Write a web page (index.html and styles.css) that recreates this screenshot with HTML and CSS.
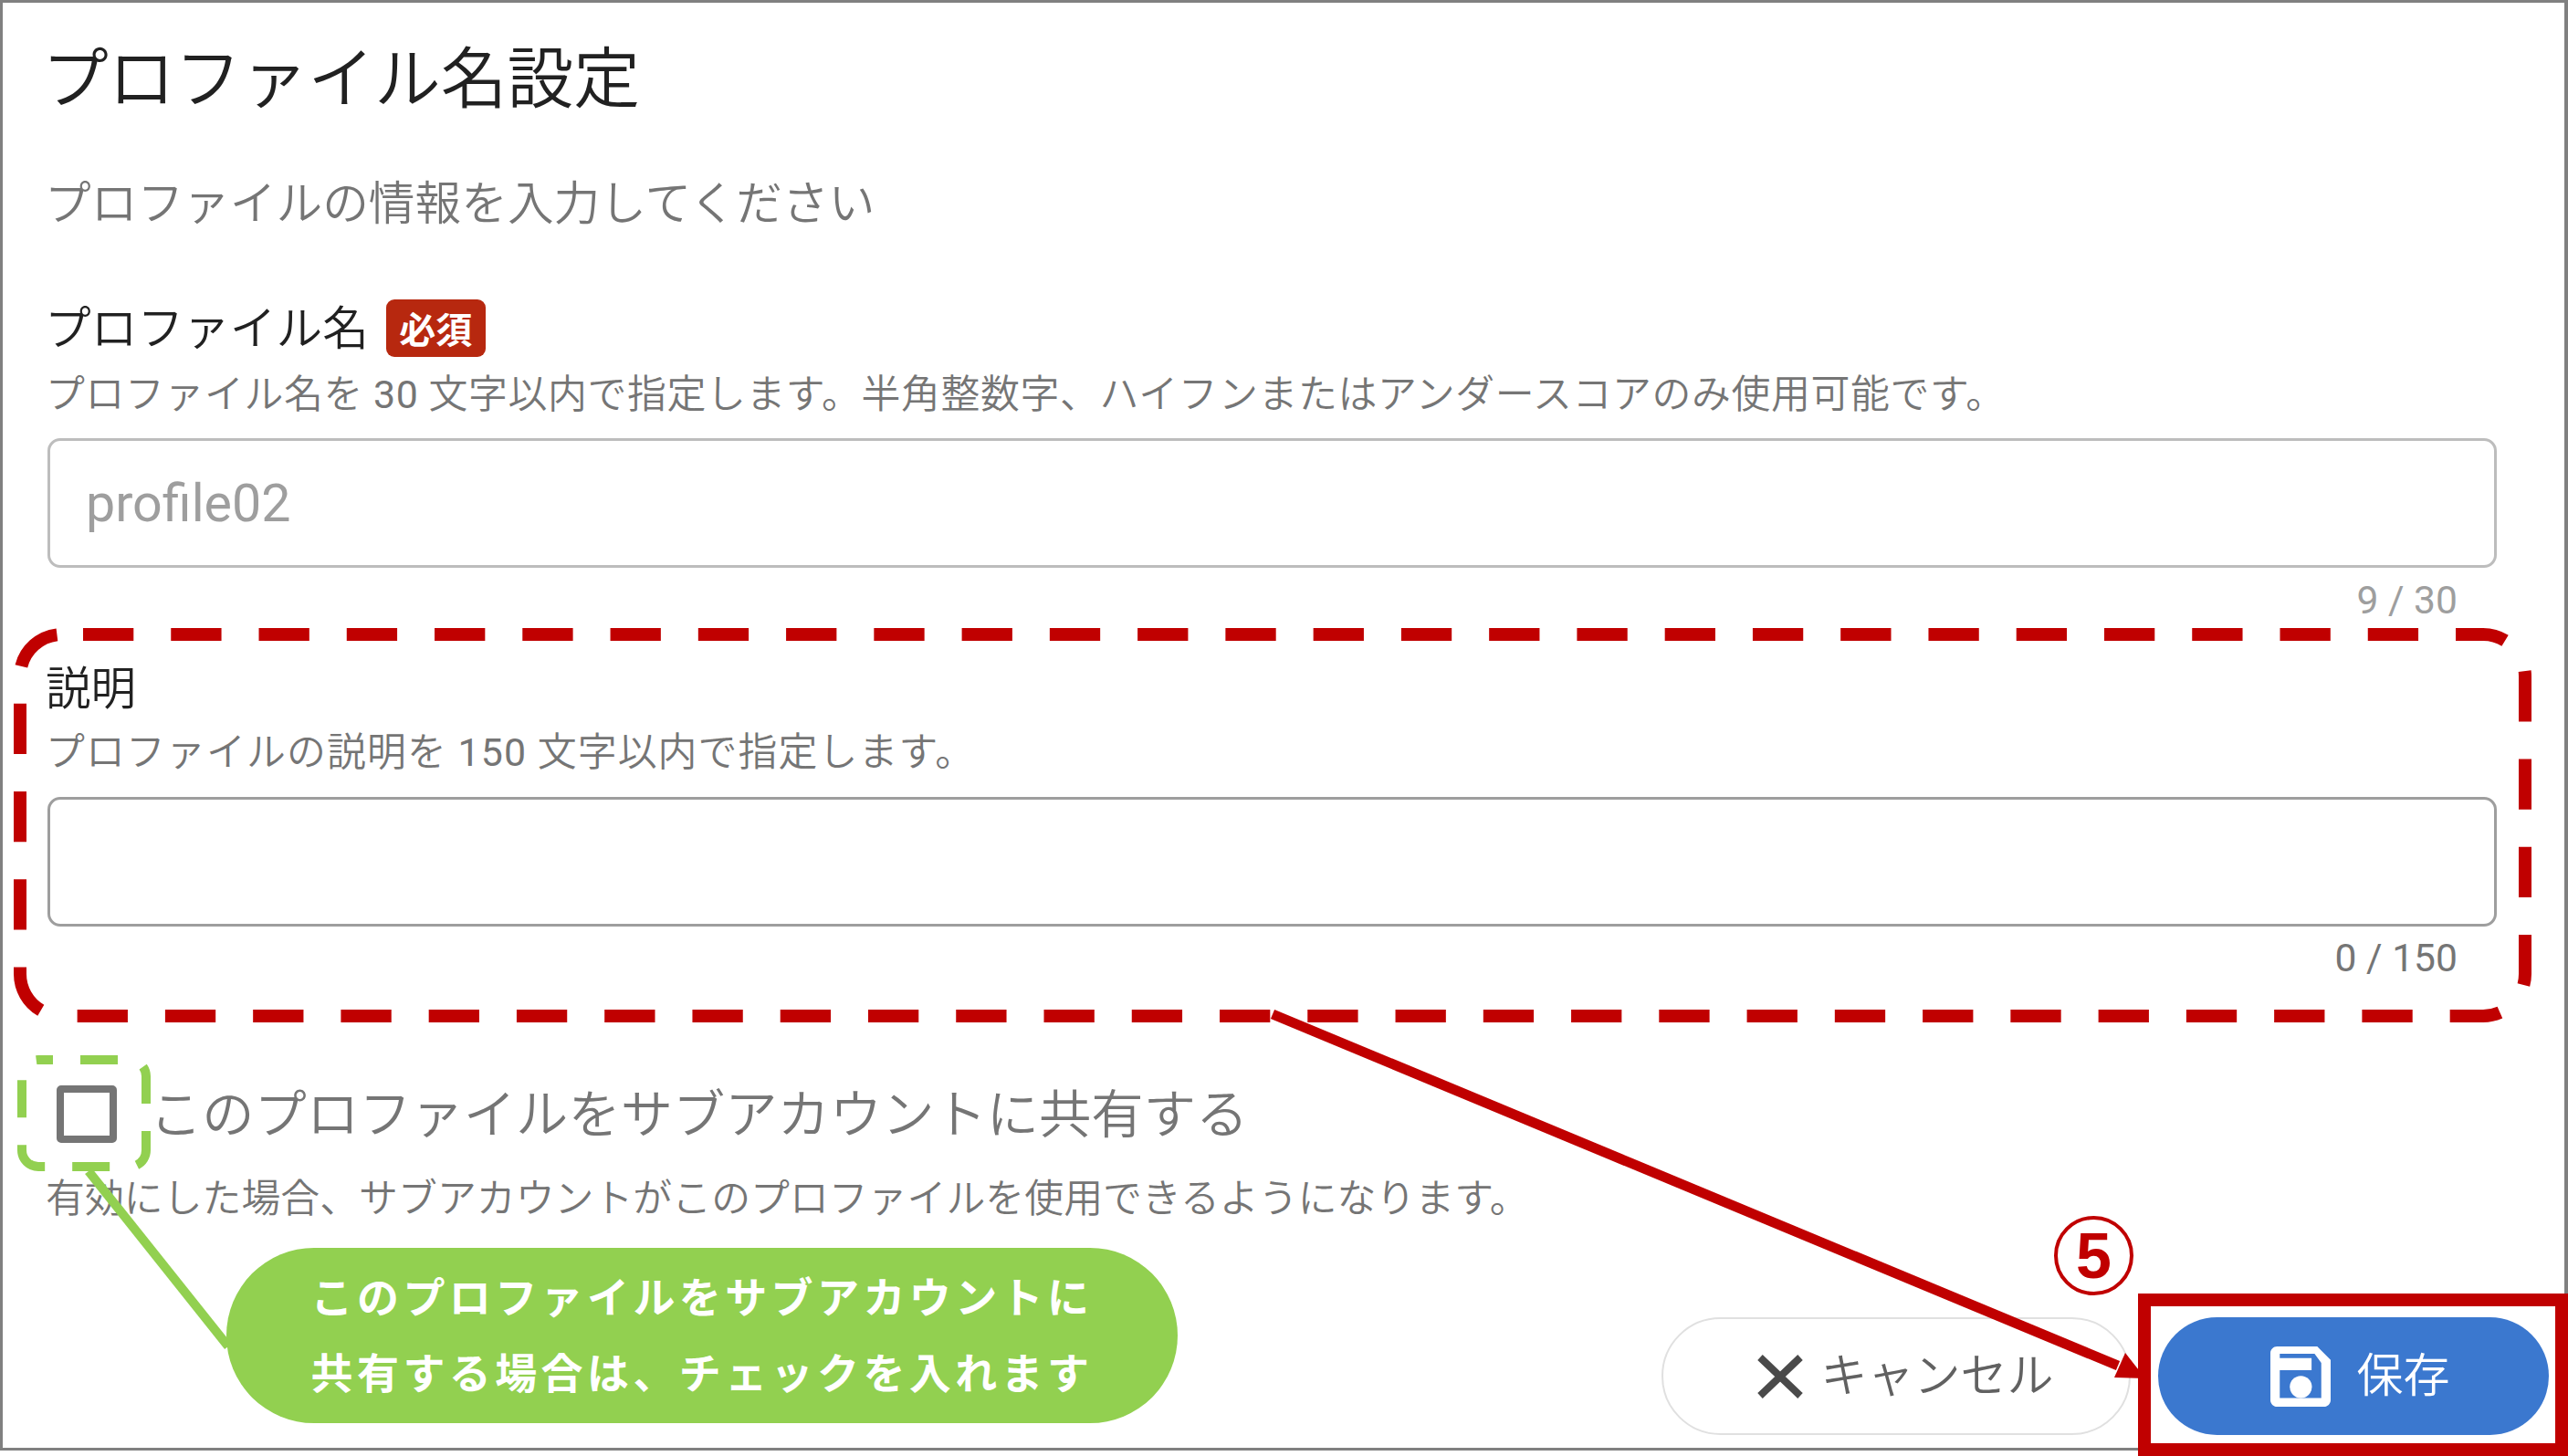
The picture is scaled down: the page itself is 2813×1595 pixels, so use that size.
FILE: index.html
```html
<!DOCTYPE html>
<html lang="ja">
<head>
<meta charset="utf-8">
<title>プロファイル名設定</title>
<link rel="stylesheet" href="styles.css">
</head>
<body>
<div class="page">
  <main class="frame">
    <h1 class="title">プロファイル名設定</h1>
    <p class="subtitle">プロファイルの情報を入力してください</p>

    <div class="label-row">
      <span class="label label-name">プロファイル名</span>
      <span class="badge">必須</span>
    </div>
    <p class="help help-first">プロファイル名を <span class="num">30</span> 文字以内で指定します。半角整数字、ハイフンまたはアンダースコアのみ使用可能です。</p>
    <div class="input input-name"><span class="placeholder">profile02</span></div>
    <div class="counter counter-light">9 / 30</div>

    <div class="label label-desc">説明</div>
    <p class="help help-desc">プロファイルの説明を <span class="num">150</span> 文字以内で指定します。</p>
    <div class="input input-desc"></div>
    <div class="counter counter-dark">0 / 150</div>

    <label class="check-row">
      <span class="checkbox"></span>
      <span class="check-label">このプロファイルをサブアカウントに共有する</span>
    </label>
    <p class="help help-check">有効にした場合、サブアカウントがこのプロファイルを使用できるようになります。</p>

    <div class="actions">
      <button class="btn btn-cancel">
        <svg class="icon-x" viewBox="0 0 50 48"><path d="M3 3L47 45M47 3L3 45"/></svg>
        <span>キャンセル</span>
      </button>
      <button class="btn btn-save">
        <svg class="icon-save" viewBox="0 0 24 24"><path fill-rule="evenodd" d="M17 3H5C3.89 3 3 3.9 3 5V19C3 20.1 3.89 21 5 21H19C20.1 21 21 20.1 21 19V7L17 3ZM18.2 18.4H5.8V10.1H15.3V6.5H5.8V5.2H16.2L18.2 7.9V18.4Z"/><circle cx="12.1" cy="15.1" r="3.3"/></svg>
        <span>保存</span>
      </button>
    </div>
  </main>

  <svg class="overlay" viewBox="0 0 2813 1595">
    <rect class="dash-red" x="22" y="695" width="2744" height="418" rx="46" ry="46"/>
    <rect class="dash-green" x="24" y="1161" width="136" height="117" rx="18" ry="18"/>
    <path class="line-green" d="M97 1283L250 1475"/>
    <path class="line-red" d="M1394 1111L2320 1496"/>
    <path class="head-red" d="M2316 1509L2328 1482L2350 1510Z"/>
    <rect class="box-red" x="2349" y="1424" width="457" height="164"/>
  </svg>

  <div class="step"><span>5</span></div>
  <div class="callout">
    <span>このプロファイルをサブアカウントに</span>
    <span>共有する場合は、チェックを入れます</span>
  </div>
</div>
</body>
</html>
```

FILE: styles.css
```css
* { box-sizing: border-box; }

html, body {
  margin: 0;
  padding: 0;
  background: #fff;
}

.page {
  position: relative;
  width: 2813px;
  height: 1595px;
  overflow: hidden;
  font-family: Roboto, "Noto Sans CJK JP", sans-serif;
  font-weight: 350;
}

.frame {
  display: flex;
  flex-direction: column;
  width: 2813px;
  height: 1589px;
  border: 3px solid #808080;
  border-right-width: 4px;
  padding: 37px 74px 0 49px;
}

.title {
  margin: 2px 0 0 -6px;
  font-size: 72.8px;
  font-weight: 350;
  line-height: 90px;
  color: #212121;
}

.subtitle {
  margin: 57px 0 0 -3px;
  font-size: 50.7px;
  line-height: 70px;
  color: #757575;
}

.label-row {
  display: flex;
  align-items: center;
  gap: 19px;
  height: 64px;
  margin-top: 68px;
}

.label {
  font-size: 50.7px;
  line-height: 60px;
  color: #212121;
}

.label-name { margin: 3px 0 0 -3px; }
.label-desc { margin: 43px 0 0 -2px; font-size: 49.5px; }

.badge {
  display: flex;
  align-items: center;
  justify-content: center;
  width: 109px;
  height: 63px;
  border-radius: 9px;
  background: #b7280f;
  color: #fff;
  font-size: 40px;
  font-weight: 700;
  font-family: "Noto Sans CJK JP", sans-serif;
}

.help {
  margin: 0 0 0 -2px;
  font-size: 42.9px;
  line-height: 60px;
  color: #757575;
  white-space: nowrap;
}

.num { font-weight: 400; }

.help-first { margin-top: 11px; letter-spacing: 0.6px; }
.help-desc { margin-top: 9px; letter-spacing: 1.1px; }
.help-check { margin-top: 23px; }

.input {
  display: flex;
  align-items: center;
  height: 142px;
  border: 3px solid #bdbdbd;
  border-radius: 14px;
  padding-left: 39px;
}

.input-name { margin-top: 18px; }
.input-desc { margin-top: 19px; border-color: #9e9e9e; }

.placeholder {
  font-size: 57.4px;
  font-weight: 400;
  color: #9e9e9e;
}

.counter {
  font-size: 42.6px;
  font-weight: 400;
  line-height: 50px;
  text-align: right;
  padding-right: 43px;
}

.counter-light { margin-top: 10px; color: #9e9e9e; }
.counter-dark { margin-top: 9px; color: #757575; }

.check-row {
  display: flex;
  align-items: center;
  height: 80px;
  margin-top: 106px;
  padding-left: 10px;
}

.checkbox {
  flex: none;
  width: 66px;
  height: 63px;
  border: 8px solid #757575;
  border-radius: 5px;
}

.check-label {
  margin: 3px 0 0 36px;
  font-size: 57.3px;
  line-height: 80px;
  color: #757575;
  white-space: nowrap;
}

.actions {
  display: flex;
  justify-content: flex-end;
  gap: 30px;
  margin: 100px -57px 0 0;
}

.btn {
  display: flex;
  align-items: center;
  justify-content: center;
  height: 129px;
  padding: 0;
  border-radius: 65px;
  font-family: inherit;
  font-size: 51px;
  font-weight: 350;
  line-height: 60px;
}

.btn-cancel {
  width: 514px;
  gap: 19px;
  padding-left: 21px;
  border: 2px solid #e0e0e0;
  background: #fff;
  color: #616161;
}

.btn-save {
  width: 428px;
  gap: 17px;
  padding-left: 4px;
  border: 0;
  background: #3b78cf;
  color: #fff;
}

.icon-x {
  width: 50px;
  height: 48px;
  fill: none;
  stroke: #4a4a4a;
  stroke-width: 8;
}

.icon-save {
  width: 88px;
  height: 88px;
  fill: #fff;
}

.overlay {
  position: absolute;
  left: 0;
  top: 0;
  width: 2813px;
  height: 1595px;
  pointer-events: none;
}

.dash-red {
  fill: none;
  stroke: #c00000;
  stroke-width: 14;
  stroke-dasharray: 55.3 40.96;
  stroke-dashoffset: -23;
}

.dash-green {
  fill: none;
  stroke: #92d050;
  stroke-width: 10;
  stroke-dasharray: 41 30;
  stroke-dashoffset: 25;
}

.line-green {
  fill: none;
  stroke: #92d050;
  stroke-width: 10;
}

.line-red {
  fill: none;
  stroke: #c00000;
  stroke-width: 11;
}

.head-red { fill: #c00000; }

.box-red {
  fill: none;
  stroke: #c00000;
  stroke-width: 14;
}

.step {
  position: absolute;
  left: 2250px;
  top: 1332px;
  display: flex;
  align-items: center;
  justify-content: center;
  width: 87px;
  height: 87px;
  border: 4px solid #c00000;
  border-radius: 50%;
  color: #c00000;
  font-family: "Liberation Sans", sans-serif;
  font-size: 70px;
  font-weight: 700;
  line-height: 1;
}

.callout {
  position: absolute;
  left: 248px;
  top: 1367px;
  display: flex;
  flex-direction: column;
  align-items: center;
  justify-content: center;
  width: 1042px;
  height: 192px;
  padding-bottom: 6px;
  border-radius: 96px;
  background: #92d050;
  color: #fff;
  font-family: "Noto Sans CJK JP", sans-serif;
  font-size: 46px;
  font-weight: 700;
  line-height: 83px;
  letter-spacing: 4.4px;
  white-space: nowrap;
}
```
